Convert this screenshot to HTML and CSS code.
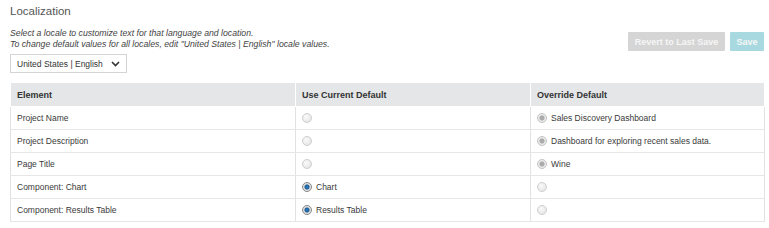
FILE: index.html
```html
<!DOCTYPE html>
<html lang="en">
<head>
    <meta charset="UTF-8">
    <title>Localization</title>
    <link rel="stylesheet" href="styles.css">
</head>
<body>

<div class="container">
    <div class="top">
        <div class="intro">
            <h1>Localization</h1>
            <p class="hint">Select a locale to customize text for that language and location.<br>To change default values for all locales, edit "United States | English" locale values.</p>
            <div class="locale-select">
                <span>United States | English</span>
                <svg width="9" height="6" viewBox="0 0 9 6"><path d="M1 1 L4.5 4.5 L8 1" fill="none" stroke="#333" stroke-width="1.6"/></svg>
            </div>
        </div>
        <div class="actions">
            <button class="revert-btn">Revert to Last Save</button>
            <button class="save-btn">Save</button>
        </div>
    </div>

    <table class="locale-table">
        <thead>
            <tr>
                <th>Element</th>
                <th>Use Current Default</th>
                <th>Override Default</th>
            </tr>
        </thead>
        <tbody>
            <tr>
                <td>Project Name</td>
                <td><span class="radio"></span></td>
                <td><span class="radio dim-on"></span>Sales Discovery Dashboard</td>
            </tr>
            <tr>
                <td>Project Description</td>
                <td><span class="radio"></span></td>
                <td><span class="radio dim-on"></span>Dashboard for exploring recent sales data.</td>
            </tr>
            <tr>
                <td>Page Title</td>
                <td><span class="radio"></span></td>
                <td><span class="radio dim-on"></span>Wine</td>
            </tr>
            <tr>
                <td>Component: Chart</td>
                <td><span class="radio on"></span>Chart</td>
                <td><span class="radio"></span></td>
            </tr>
            <tr>
                <td>Component: Results Table</td>
                <td><span class="radio on"></span>Results Table</td>
                <td><span class="radio"></span></td>
            </tr>
        </tbody>
    </table>
</div>

</body>
</html>
```

FILE: styles.css
```css
body {
    font-family: 'Liberation Sans', Arial, sans-serif;
    margin: 0;
    padding: 0;
    background-color: #fff;
    color: #333;
}
.container {
    padding: 3px 5px 0 10px;
}
.top {
    display: flex;
    justify-content: space-between;
    align-items: flex-start;
}
h1 {
    font-size: 11.5px;
    font-weight: normal;
    color: #555;
    margin: 1px 0 0 0;
    line-height: 15px;
}
.hint {
    font-size: 8.7px;
    font-style: italic;
    color: #444;
    margin: 9px 0 0 0;
    line-height: 11px;
}
.locale-select {
    display: flex;
    align-items: center;
    justify-content: space-between;
    width: 103px;
    height: 17px;
    padding: 0 6px;
    margin-top: 4px;
    border: 1px solid #d4d4d4;
    font-size: 8.5px;
    color: #333;
}
.actions {
    display: flex;
    gap: 5px;
    margin-top: 29px;
}
button {
    font-family: 'Liberation Sans', Arial, sans-serif;
    font-size: 9px;
    font-weight: bold;
    color: #f6f6f6;
    height: 19px;
    padding: 0 4px;
    border: none;
    border-radius: 1px;
}
.revert-btn {
    background-color: #d5d5d5;
    width: 97px;
}
.save-btn {
    background-color: #a9d9e0;
    width: 34px;
}
.locale-table {
    width: 755px;
    border-collapse: collapse;
    margin-top: 10px;
    font-size: 8.5px;
}
.locale-table th,
.locale-table td {
    text-align: left;
    height: 22px;
    padding: 0 6px;
    border: 1px solid #e2e2e2;
    border-top: none;
    vertical-align: middle;
}
.locale-table th {
    background-color: #e4e6e8;
    color: #333;
    font-size: 9px;
    font-weight: bold;
    height: 23px;
    border-color: #fff;
}
.locale-table td {
    color: #3a3a3a;
    border-bottom: 1px solid #e6e6e6;
}
.locale-table th:nth-child(1),
.locale-table td:nth-child(1) {
    width: 272px;
}
.locale-table th:nth-child(2),
.locale-table td:nth-child(2) {
    width: 222px;
}
.radio {
    display: inline-block;
    width: 8px;
    height: 8px;
    border-radius: 50%;
    border: 1px solid #cfcfcf;
    background: radial-gradient(circle at 40% 35%, #fafafa, #e0e0e0);
    vertical-align: -2px;
    margin-right: 4px;
    box-sizing: content-box;
}
.radio.on {
    border-color: #8a8a8a;
    background: radial-gradient(circle, #2a7fc4 0, #1c5f99 2px, #d8d8d8 3px, #eee 5px);
}
.radio.dim-on {
    border-color: #c4c4c4;
    background: radial-gradient(circle, #b0b0b0 0, #a8a8a8 2px, #e8e8e8 3px, #f2f2f2 5px);
}
```
